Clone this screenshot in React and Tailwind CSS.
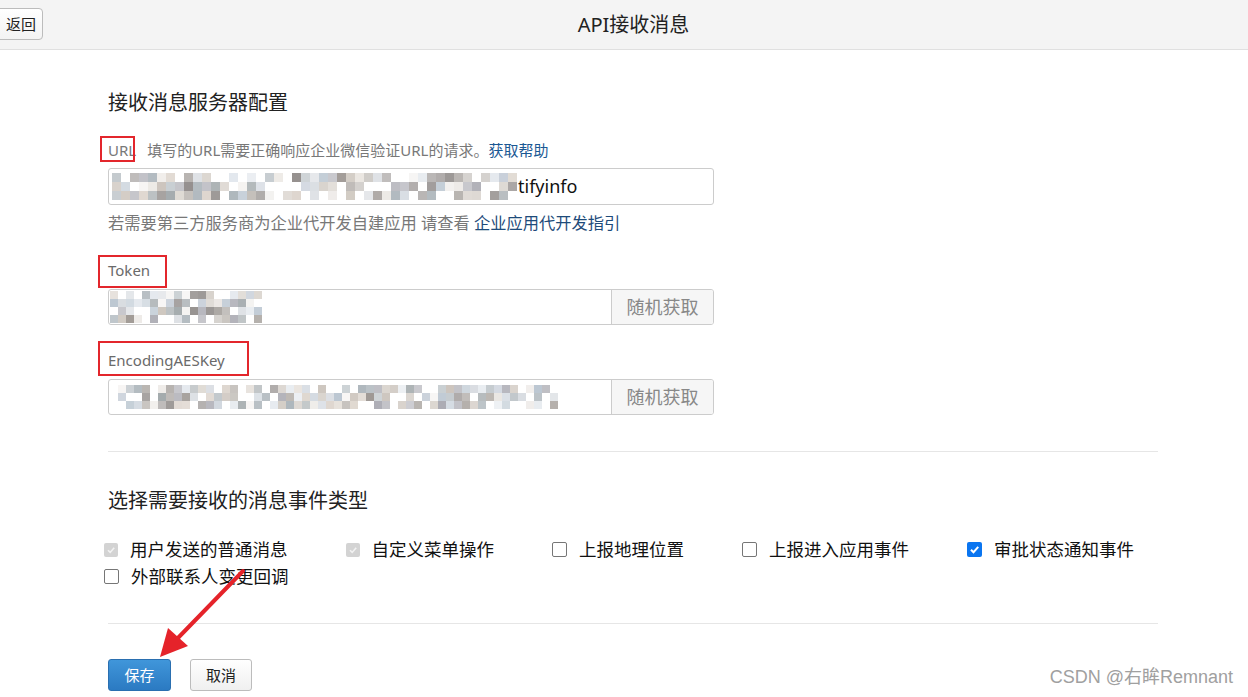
import React from "react";

const FONT = { fontFamily: '"Noto Sans", "Noto Sans CJK SC", sans-serif' };

function rng(seed) {
  let s = seed;
  return () => {
    s = (s * 9301 + 49297) % 233280;
    return s / 233280;
  };
}
const PALETTE = ["#c9c1b9", "#a8a8b0", "#d6dadf", "#9a948f", "#e9e5e1", "#b8c4cf", "#8f8a88", "#cfc8c0", "#aab3b9", "#dcd4cc", "#f2f0ee", "#b7b2ac", "#c4ccd6", "#9fa6a9", "#e1e6ec"];

function Mosaic({ width, height, seed, cell = 9 }) {
  const r = rng(seed);
  const cols = Math.floor(width / cell);
  const rows = Math.floor(height / cell);
  const rects = [];
  for (let y = 0; y < rows; y++) {
    for (let x = 0; x < cols; x++) {
      const v = r();
      if (v < 0.22) continue;
      rects.push(
        <rect key={`${x}-${y}`} x={x * cell} y={y * cell} width={cell} height={cell} fill={PALETTE[Math.floor(r() * PALETTE.length)]} opacity={0.45 + v * 0.5} />
      );
    }
  }
  return (
    <svg width={width} height={height} className="block">
      {rects}
    </svg>
  );
}

function Checkbox({ state }) {
  if (state === "disabled") {
    return (
      <span className="w-[14px] h-[14px] rounded-[2px] bg-[#d3d3d3] flex items-center justify-center shrink-0">
        <svg width="10" height="10" viewBox="0 0 10 10"><path d="M2 5.2 L4.2 7.4 L8.2 2.8" stroke="#f2f2f2" strokeWidth="1.6" fill="none" /></svg>
      </span>
    );
  }
  if (state === "checked") {
    return (
      <span className="w-[15px] h-[15px] rounded-[2px] bg-[#0a75f0] flex items-center justify-center shrink-0">
        <svg width="11" height="11" viewBox="0 0 10 10"><path d="M1.8 5.2 L4.1 7.5 L8.4 2.6" stroke="#fff" strokeWidth="1.8" fill="none" /></svg>
      </span>
    );
  }
  return <span className="w-[15px] h-[15px] rounded-[2px] border border-[#767676] bg-white shrink-0" />;
}

function Item({ state, label, className = "" }) {
  return (
    <label className={`flex items-center h-[27px] ${className}`}>
      <Checkbox state={state} />
      <span className="ml-[12px] text-[17.5px] leading-[27px] text-[#111] whitespace-nowrap">{label}</span>
    </label>
  );
}

export default function App() {
  return (
    <div className="relative w-[1248px] h-[697px] bg-white overflow-hidden" style={FONT}>
      <header className="h-[50px] bg-[#f4f4f4] border-b border-[#e0e0e0] relative flex items-center justify-center">
        <button className="absolute left-[-6px] top-[8px] w-[49px] h-[32px] pl-[5px] border border-[#bcbcbc] rounded-[4px] bg-gradient-to-b from-white to-[#f3f3f3] text-[15px] text-[#222]">返回</button>
        <h1 className="text-[20px] text-[#222] ml-[19px]">API接收消息</h1>
      </header>

      <main className="ml-[108px] w-[1050px]">
        <h2 className="mt-[40px] text-[20px] leading-[26px] text-[#222]">接收消息服务器配置</h2>

        <div className="relative mt-[24px] h-[20px] text-[15px] leading-[20px] text-[#787878] flex">
          <span>URL</span>
          <span className="ml-[11px]">填写的URL需要正确响应企业微信验证URL的请求。</span>
          <span className="text-[#1b5994]">获取帮助</span>
          <span className="absolute left-[-8px] top-[-4px] w-[35px] h-[26px] border-2 border-[#e3262c]" />
        </div>

        <div className="mt-[8px] w-[606px] h-[37px] border border-[#cccccc] rounded-[3px] flex items-center pl-[3px] overflow-hidden">
          <Mosaic width={405} height={27} seed={7} />
          <span className="text-[18px] text-[#111] ml-[1px]">tifyinfo</span>
        </div>

        <p className="mt-[7px] text-[16.25px] leading-[22px] text-[#787878]">
          若需要第三方服务商为企业代开发自建应用 请查看 <span className="text-[#1e4b7a]">企业应用代开发指引</span>
        </p>

        <div className="relative mt-[26px] h-[20px] text-[15px] leading-[20px] text-[#6a6a6a]">
          <span>Token</span>
          <span className="absolute left-[-10px] top-[-5px] w-[69px] h-[33px] border-2 border-[#e3262c]" />
        </div>
        <div className="mt-[9px] w-[606px] h-[36px] border border-[#cccccc] rounded-[3px] flex overflow-hidden">
          <div className="flex-1 flex items-center pl-[1px]">
            <Mosaic width={153} height={33} seed={31} cell={8} />
          </div>
          <div className="w-[102px] border-l border-[#cccccc] bg-[#f6f6f6] flex items-center justify-center text-[18px] text-[#888]">随机获取</div>
        </div>

        <div className="relative mt-[25px] h-[20px] text-[15px] leading-[20px] text-[#6a6a6a]">
          <span>EncodingAESKey</span>
          <span className="absolute left-[-10px] top-[-9px] w-[151px] h-[35px] border-2 border-[#e3262c]" />
        </div>
        <div className="mt-[9px] w-[606px] h-[36px] border border-[#cccccc] rounded-[3px] flex overflow-hidden">
          <div className="flex-1 flex items-center pl-[9px]">
            <Mosaic width={445} height={24} seed={55} cell={8} />
          </div>
          <div className="w-[102px] border-l border-[#cccccc] bg-[#f6f6f6] flex items-center justify-center text-[18px] text-[#888]">随机获取</div>
        </div>

        <div className="mt-[36px] h-px bg-[#e6e6e6]" />

        <h2 className="mt-[36px] text-[20px] leading-[26px] text-[#222]">选择需要接收的消息事件类型</h2>

        <div className="mt-[22px] ml-[-4px] flex flex-wrap">
          <Item state="disabled" label="用户发送的普通消息" className="mr-[58px]" />
          <Item state="disabled" label="自定义菜单操作" className="mr-[58px]" />
          <Item state="none" label="上报地理位置" className="mr-[58px]" />
          <Item state="none" label="上报进入应用事件" className="mr-[58px]" />
          <Item state="checked" label="审批状态通知事件" />
          <Item state="none" label="外部联系人变更回调" />
        </div>

        <div className="mt-[33px] h-px bg-[#e6e6e6]" />

        <div className="mt-[35px] flex gap-[19px]">
          <button className="w-[63px] h-[32px] rounded-[3px] border border-[#2a6fb0] bg-gradient-to-b from-[#4096da] to-[#2b7ac2] text-white text-[15px]">保存</button>
          <button className="w-[62px] h-[32px] rounded-[3px] border border-[#bcbcbc] bg-gradient-to-b from-white to-[#f0f0f0] text-[#222] text-[15px]">取消</button>
        </div>
      </main>

      <svg className="absolute left-0 top-0 pointer-events-none" width="1248" height="697">
        <line x1="243" y1="571" x2="176" y2="640" stroke="#e5232a" strokeWidth="4" strokeLinecap="round" />
        <polygon points="160,657 168,628 188,646" fill="#e5232a" />
      </svg>

      <div className="absolute right-[15px] top-[665px] text-[18px] leading-[24px] text-[#a0a0a0]" style={{ fontFamily: '"Liberation Sans", "Noto Sans CJK SC", sans-serif' }}>CSDN @右眸Remnant</div>
    </div>
  );
}
